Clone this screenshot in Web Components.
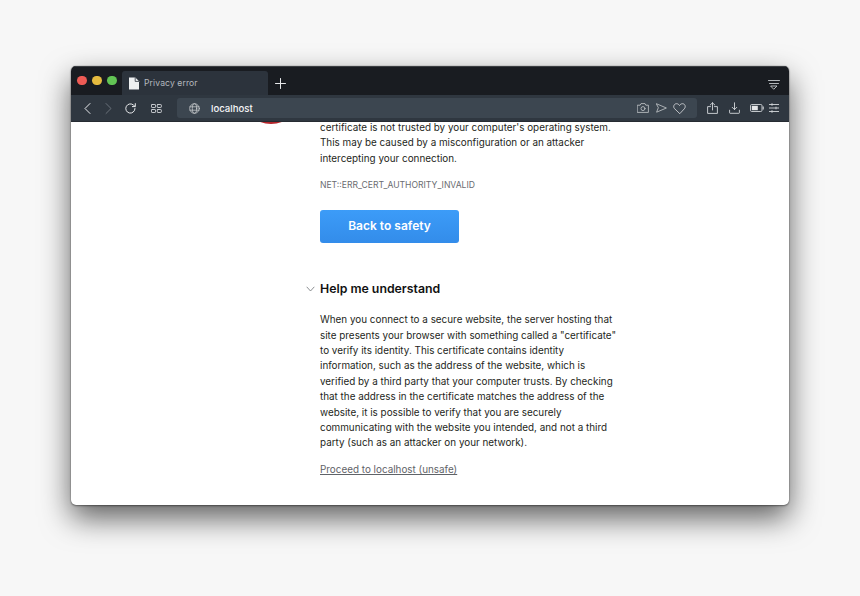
<!DOCTYPE html>
<html lang="en"><head><meta charset="utf-8"><title>Privacy error</title>
<style>
html,body{margin:0;height:100%}
body{background:#f7f7f7;font-family:Inter,"Liberation Sans",sans-serif;overflow:hidden}
</style></head><body>
<browser-window>
  <title-bar slot="title"></title-bar>
  <tool-bar slot="tools"></tool-bar>
  <error-page>
    <p>certificate is not trusted by your computer's operating system.<br>This may be caused by a misconfiguration or an attacker<br>intercepting your connection.</p>
  </error-page>
</browser-window>
<script>
const def=(name,html)=>customElements.define(name,class extends HTMLElement{constructor(){super();this.attachShadow({mode:'open'}).innerHTML=html}});
const S='fill="none" stroke="currentColor" stroke-linecap="round" stroke-linejoin="round"';
def('browser-window',`<style>
:host{display:block;box-sizing:border-box;width:718px;height:439px;margin:66px 0 0 71px;border-radius:5px;background:#fff;position:relative;
box-shadow:0 0 1px #444,0 1px 2px rgba(0,0,0,.4),0 13px 30px 0 rgba(0,0,0,.62)}
.w{display:flex;flex-direction:column;height:100%;border-radius:5px;overflow:hidden}
.c{flex:1;min-height:0;overflow:hidden}
</style><div class="w"><slot name="title"></slot><slot name="tools"></slot><div class="c"><slot></slot></div></div>`);
def('title-bar',`<style>
:host{display:flex;height:29px;background:#191c21;box-sizing:border-box;border-top:1px solid #3b3e42;align-items:flex-end;color:#fff}
.lights{display:flex;gap:5.5px;padding:0 0 10px 6px;width:45px;box-sizing:border-box;align-self:flex-end}
.lights i{width:9.5px;height:9.5px;border-radius:50%;display:block;flex:none}
.tab{width:146px;height:24px;background:#2c333c;border-radius:3px 3px 0 0;display:flex;align-items:center;padding-left:6px;box-sizing:border-box;gap:4px;margin-left:6px;color:#b4b9bf;font-size:8.6px;letter-spacing:.1px}
.plus{margin:0 0 5px 6px;width:13px;height:13px;color:#e6e8ea}
.sp{flex:1}
.menu{margin:0 9px 5px 0;color:#c5c9cd}
svg{display:block}
</style>
<div class="lights"><i style="background:#ee5b55"></i><i style="background:#e6bb3f"></i><i style="background:#62c454"></i></div>
<div class="tab"><svg width="12" height="13" viewBox="0 0 12 13"><path d="M1 .5h6.4L11 4.2v8.3H1z" fill="#eef0f1"/><path d="M7.2 .5V4.4H11" fill="none" stroke="#2c333c" stroke-width=".8"/></svg><span>Privacy error</span></div>
<svg class="plus" viewBox="0 0 13 13"><path d="M6.5 1.5v10M1.5 6.5h10" ${S} stroke-width="1"/></svg>
<div class="sp"></div>
<svg class="menu" width="12" height="11" viewBox="0 0 12 11"><path d="M.5 1.5h11M1.5 4.5h9M3 7h6L6 10z" ${S} stroke-width=".9"/></svg>`);
def('tool-bar',`<style>
:host{display:flex;height:27px;background:#2f3740;align-items:center;color:#d5d8db;box-sizing:border-box;border-bottom:1px solid #262b32}
svg{display:block;flex:none}
.nav{display:flex;align-items:center;margin-left:12px}
.addr{display:flex;align-items:center;width:520px;height:20px;margin-left:15px;background:#3c4650;border-radius:3px;box-sizing:border-box;padding:0 11px 0 12px;color:#f4f5f6;font-size:9.6px;font-weight:500}
.addr span{margin-left:11px;flex:1}
.r{display:flex;align-items:center}
</style>
<div class="nav">
<svg width="10" height="13" viewBox="0 0 10 13" style="color:#e8eaec"><path d="M7 1.5 2 6.5l5 5" ${S} stroke-width="1"/></svg>
<svg width="10" height="13" viewBox="0 0 10 13" style="margin-left:10px;color:#6b727a"><path d="M3 1.5l5 5-5 5" ${S} stroke-width="1"/></svg>
<svg width="13" height="13" viewBox="0 0 13 13" style="margin-left:11px;color:#e8eaec"><path d="M11 6.5A4.6 4.6 0 1 1 9.6 3.2L11 4.4M11.3 1.6v3H8.4" ${S} stroke-width="1"/></svg>
<svg width="11" height="9" viewBox="0 0 11 9" style="margin-left:14px"><g ${S} stroke-width=".9"><rect x=".5" y=".5" width="4" height="3" rx=".6"/><rect x="6.3" y=".5" width="4" height="3" rx=".6"/><rect x=".5" y="5.5" width="4" height="3" rx=".6"/><rect x="6.3" y="5.5" width="4" height="3" rx=".6"/></g></svg>
</div>
<div class="addr">
<svg width="11" height="11" viewBox="0 0 11 11" style="color:#c6cacd"><g ${S} stroke-width=".8"><circle cx="5.5" cy="5.5" r="4.8"/><ellipse cx="5.5" cy="5.5" rx="2.2" ry="4.8"/><path d="M1 3.8h9M1 7.2h9"/></g></svg>
<span>localhost</span>
<svg width="12" height="10" viewBox="0 0 12 10" style="color:#c6cacd"><g ${S} stroke-width=".8"><path d="M.6 2.2h2.6l.8-1.6h4l.8 1.6h2.6v7.2H.6z"/><circle cx="6" cy="5.6" r="2"/></g></svg>
<svg width="11" height="10" viewBox="0 0 11 10" style="margin-left:7px;color:#c6cacd"><path d="M.6.8 10.4 5 .6 9.2l1.6-4.2z" ${S} stroke-width=".8"/></svg>
<svg width="13" height="11" viewBox="0 0 13 11" style="margin-left:6px;color:#dfe1e3"><path d="M6.5 10.4 1.5 5.6C-.2 3.8 1 .7 3.5.7c1.3 0 2.3.7 3 1.8.7-1.1 1.7-1.8 3-1.8 2.5 0 3.7 3.1 2 4.9z" ${S} stroke-width=".8"/></svg>
</div>
<div class="r">
<svg width="11" height="12" viewBox="0 0 11 12" style="margin-left:10px"><path d="M3.5 4.6H.6v6.8h9.8V4.6H7.5M5.5 8V.8M3.2 3 5.5.8 7.8 3" ${S} stroke-width=".9"/></svg>
<svg width="11" height="12" viewBox="0 0 11 12" style="margin-left:11px"><path d="M.6 8.2v2.6c0 .3.2.5.5.5h8.8c.3 0 .5-.2.5-.5V8.2M5.5 .8V7.6M3.2 5.3l2.3 2.3 2.3-2.3" ${S} stroke-width=".9"/></svg>
<svg width="14" height="8" viewBox="0 0 14 8" style="margin-left:10px"><rect x=".5" y=".5" width="11.5" height="7" rx="1.2" fill="none" stroke="currentColor" stroke-width=".9"/><rect x="1.8" y="1.8" width="6" height="4.4" fill="#e6e8ea"/><path d="M13.2 2.6v2.8" stroke="currentColor" stroke-width="1.1"/></svg>
<svg width="10" height="10" viewBox="0 0 10 10" style="margin-left:5px"><path d="M0 1.5h10M0 5h10M0 8.5h10M3 .2v2.6M7 3.7v2.6M3 7.2v2.6" fill="none" stroke="currentColor" stroke-width=".9"/></svg>
</div>`);
def('error-page',`<style>
:host{display:flex;color:#1e1f21;font-size:9.88px;line-height:15.4px}
.gut{width:249px;flex:none;display:flex;justify-content:flex-end;box-sizing:border-box;padding-right:19.5px}
.icon{width:60px;height:60px;margin-top:-57.7px;border-radius:50%;background:#b5262c;flex:none}
.main{width:298px}
::slotted(p){margin:-2px 0 0;font-size:9.88px;line-height:15.4px;color:#1e1f21;white-space:nowrap}
.code{font-size:8.58px;color:#6a6c70;line-height:12px;margin-top:13px}
.btn{display:flex;align-items:center;justify-content:center;width:139px;height:33px;margin-top:18.5px;border-radius:3px;background:linear-gradient(#3c9cf8,#338cea);color:#fff;font-size:12px;font-weight:600;box-sizing:border-box;padding-bottom:1px}
.help{display:flex;align-items:center;margin:37px 0 0 -14px;font-size:12.3px;font-weight:600;color:#111;line-height:18px;gap:5px}
.help svg{width:9px;height:6px;flex:none;color:#6f7276}
.body{margin-top:14.5px;white-space:nowrap}
.link{display:block;margin-top:11.5px;color:#5f6368;text-decoration:underline;font-size:9.88px}
</style>
<div class="gut"><div class="icon"></div></div>
<div class="main">
<slot></slot>
<div class="code">NET::ERR_CERT_AUTHORITY_INVALID</div>
<div class="btn">Back to safety</div>
<div class="help"><svg viewBox="0 0 9 6"><path d="M.7.8 4.5 5 8.3.8" fill="none" stroke="currentColor" stroke-width=".8"/></svg><span>Help me understand</span></div>
<div class="body">When you connect to a secure website, the server hosting that<br>site presents your browser with something called a "certificate"<br>to verify its identity. This certificate contains identity<br>information, such as the address of the website, which is<br>verified by a third party that your computer trusts. By checking<br>that the address in the certificate matches the address of the<br>website, it is possible to verify that you are securely<br>communicating with the website you intended, and not a third<br>party (such as an attacker on your network).</div>
<a class="link">Proceed to localhost (unsafe)</a>
</div>`);
</script>
</body></html>
